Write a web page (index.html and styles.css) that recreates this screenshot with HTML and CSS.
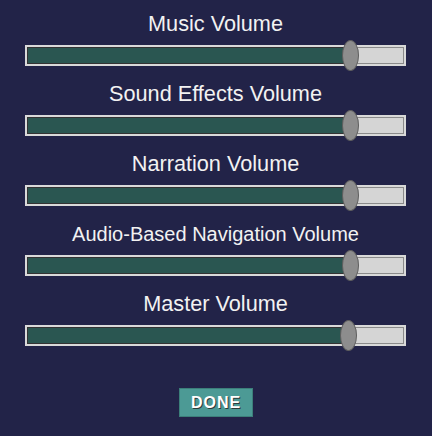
FILE: index.html
```html
<!DOCTYPE html>
<html>
<head>
<meta charset="utf-8">
<link rel="stylesheet" href="styles.css">
</head>
<body>
<div class="panel">
  <div class="row">
    <div class="label">Music Volume</div>
    <div class="track">
      <div class="fill" style="width: 323px"></div>
      <div class="thumb" style="left: 315px"></div>
    </div>
  </div>
  <div class="row">
    <div class="label">Sound Effects Volume</div>
    <div class="track">
      <div class="fill" style="width: 323px"></div>
      <div class="thumb" style="left: 315px"></div>
    </div>
  </div>
  <div class="row">
    <div class="label">Narration Volume</div>
    <div class="track">
      <div class="fill" style="width: 323px"></div>
      <div class="thumb" style="left: 315px"></div>
    </div>
  </div>
  <div class="row">
    <div class="label small">Audio-Based Navigation Volume</div>
    <div class="track">
      <div class="fill" style="width: 323px"></div>
      <div class="thumb" style="left: 315px"></div>
    </div>
  </div>
  <div class="row">
    <div class="label">Master Volume</div>
    <div class="track">
      <div class="fill" style="width: 321px"></div>
      <div class="thumb" style="left: 313px"></div>
    </div>
  </div>
  <div class="actions">
    <button class="done">DONE</button>
  </div>
</div>
</body>
</html>
```

FILE: styles.css
```css
html, body {
  margin: 0;
  padding: 0;
}
body {
  background: #222348;
  width: 432px;
  height: 436px;
  overflow: hidden;
  font-family: "Liberation Sans", Arial, sans-serif;
}
.panel {
  display: flex;
  flex-direction: column;
  align-items: center;
  padding-top: 11px;
  padding-right: 1px;
  gap: 15px;
}
.row {
  display: flex;
  flex-direction: column;
  align-items: center;
  gap: 8px;
  width: 381px;
}
.label {
  color: #f2f2f2;
  font-size: 21.7px;
  line-height: 26px;
  height: 26px;
  white-space: nowrap;
}
.label.small {
  font-size: 20px;
}
.track {
  position: relative;
  box-sizing: border-box;
  width: 381px;
  height: 21px;
  border: 2px solid #d9d9d9;
  background: #d5d5d5;
  box-shadow: inset 0 0 0 1px #8a8a8a;
}
.fill {
  position: absolute;
  left: 0;
  top: 0;
  bottom: 0;
  background: #2a5651;
  box-shadow: inset 0 1px 0 #333, inset 1px 0 0 #333, inset 0 -1px 0 #333;
}
.thumb {
  position: absolute;
  top: -7px;
  width: 17px;
  height: 31px;
  box-sizing: border-box;
  border-radius: 50%;
  background: #8d8d8d;
  border: 1px solid #5e5e5e;
}
.actions {
  display: flex;
  justify-content: center;
  margin-top: 27px;
}
.done {
  box-sizing: border-box;
  width: 74px;
  height: 29px;
  background: #4c9a95;
  border: 1px solid #3c7f7a;
  color: #ffffff;
  font-family: "Liberation Sans", Arial, sans-serif;
  font-size: 16px;
  font-weight: bold;
  letter-spacing: 1px;
  padding: 0 0 0 1px;
  text-shadow: 1px 1px 0 #2d3b3a;
}
```
